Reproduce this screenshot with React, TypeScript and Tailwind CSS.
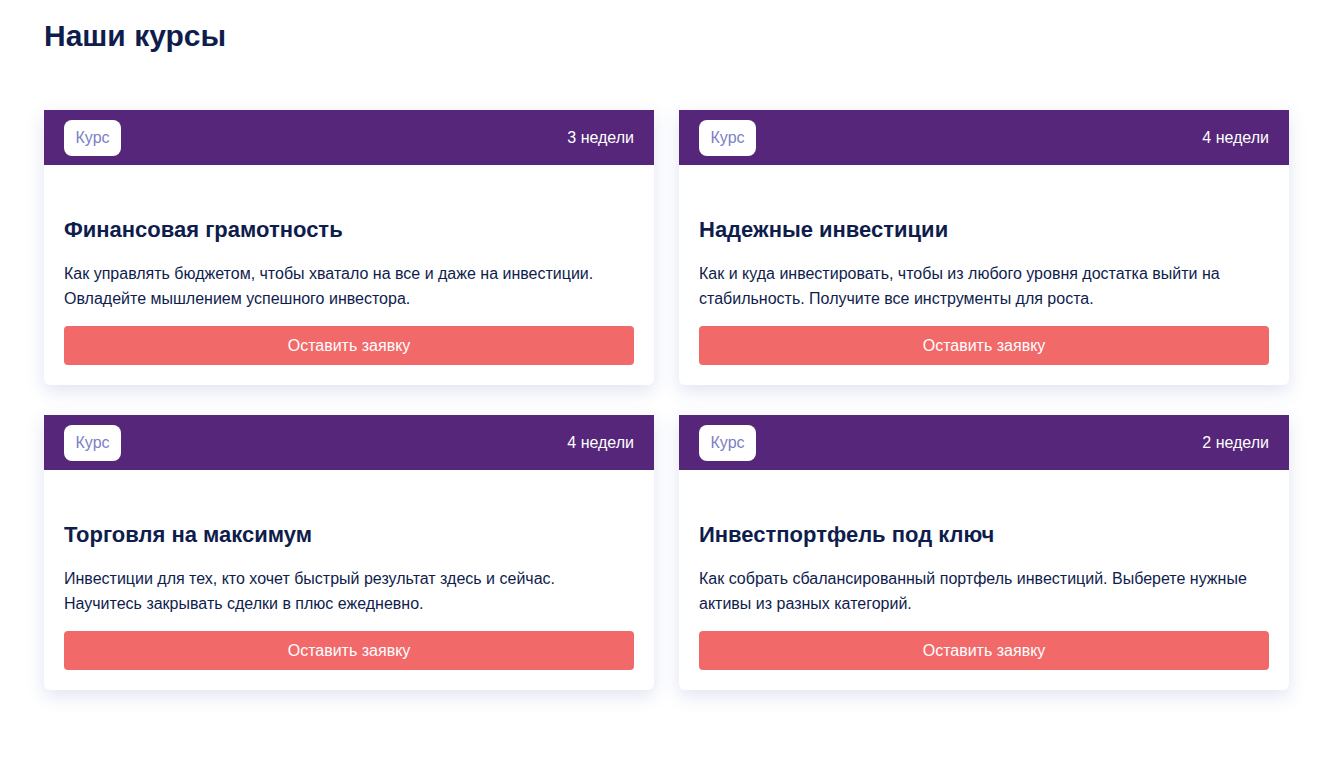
import React from 'react';

interface Course {
    weeks: string;
    title: string;
    text: string;
}

const courses: Course[] = [
    {
        weeks: '3 недели',
        title: 'Финансовая грамотность',
        text: 'Как управлять бюджетом, чтобы хватало на все и даже на инвестиции. Овладейте мышлением успешного инвестора.',
    },
    {
        weeks: '4 недели',
        title: 'Надежные инвестиции',
        text: 'Как и куда инвестировать, чтобы из любого уровня достатка выйти на стабильность. Получите все инструменты для роста.',
    },
    {
        weeks: '4 недели',
        title: 'Торговля на максимум',
        text: 'Инвестиции для тех, кто хочет быстрый результат здесь и сейчас. Научитесь закрывать сделки в плюс ежедневно.',
    },
    {
        weeks: '2 недели',
        title: 'Инвестпортфель под ключ',
        text: 'Как собрать сбалансированный портфель инвестиций. Выберете нужные активы из разных категорий.',
    },
];

const CourseCard: React.FC<{ course: Course }> = ({ course }) => (
    <div className="bg-white rounded-b-md shadow-[0_6px_18px_rgba(60,90,180,0.16)] flex flex-col">
        <div className="bg-[#55267a] h-[55px] px-5 flex items-center justify-between">
            <span className="bg-white rounded-lg h-9 px-[11.5px] flex items-center text-[16px] text-[#7d80c6]">Курс</span>
            <span className="text-white text-[16px]">{course.weeks}</span>
        </div>
        <div className="px-5 pt-[52px] pb-[20px]">
            <h3 className="text-[22px] leading-[26px] font-bold text-[#0f1d4d]">{course.title}</h3>
            <p className="mt-[18px] text-[16px] leading-[25px] text-[#0f1d4d]">{course.text}</p>
            <button className="mt-[15px] w-full h-[39px] rounded bg-[#f26969] text-white text-[16px]">
                Оставить заявку
            </button>
        </div>
    </div>
);

export default function App() {
    return (
        <div className="min-h-screen bg-white px-11 pt-[16px] font-['Liberation_Sans',Arial,sans-serif]">
            <h1 className="text-[30px] leading-[40px] font-bold text-[#0f1d4d]">Наши курсы</h1>
            <div className="mt-[54px] w-[1245px] grid grid-cols-2 gap-x-[25px] gap-y-[30px]">
                {courses.map((c, i) => (
                    <CourseCard key={i} course={c} />
                ))}
            </div>
        </div>
    );
}
